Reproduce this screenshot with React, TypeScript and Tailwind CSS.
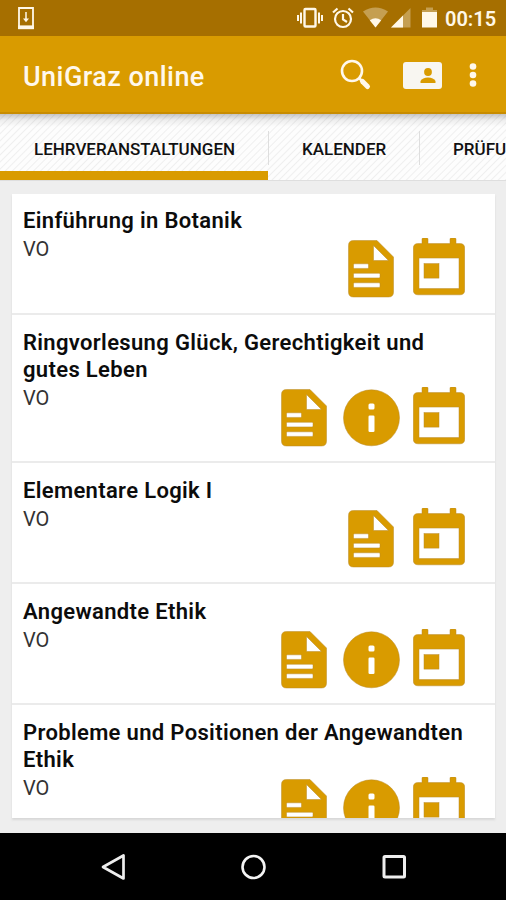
const GOLD = '#d99b00';

function DocIcon() {
  return (
    <svg width="46" height="60" viewBox="0 0 46 60" className="shrink-0">
      <path fillRule="evenodd" fill={GOLD} stroke="#b98a2a" strokeWidth="0.5"
        d="M5.5 2.5H29L45.500 19V54q0 5-5 5H5.500q-5 0-5-5V7.500q0-5 5-5zM25.500 7.500V22.500H40.500zM6.500 25.800q-1 0-1 1v2.600q0 1 1 1H19.500q1 0 1-1V26.800q0-1-1-1zM6.500 35.300q-1 0-1 1v2.600q0 1 1 1H31q1 0 1-1V36.300q0-1-1-1zM6.500 44.800q-1 0-1 1v2.600q0 1 1 1H31q1 0 1-1V45.800q0-1-1-1z" />
    </svg>
  );
}

function InfoIcon() {
  return (
    <svg width="57" height="60" viewBox="0 0 57 60" className="shrink-0">
      <circle cx="28.500" cy="30.800" r="28" fill={GOLD} stroke="#b98a2a" strokeWidth="0.5" />
      <rect x="25.500" y="16.500" width="6" height="6" rx="1.500" fill="#fff" />
      <rect x="25.500" y="28.500" width="6" height="16.500" rx="1.300" fill="#fff" />
    </svg>
  );
}

function CalendarIcon() {
  return (
    <svg width="52" height="60" viewBox="0 0.4 52 60" className="shrink-0">
      <path fillRule="evenodd" fill={GOLD} stroke="#b98a2a" strokeWidth="0.5"
        d="M9 6V1.500q0-1 1-1H14q1 0 1 1V6H37V1.500q0-1 1-1H42q1 0 1 1V6H47q4.700 0 4.700 4.700V52.500q0 4.700-4.700 4.700H5Q.3 57.200.3 52.500V10.700Q.3 6 5 6zM6 20.500V51H46V20.500z" />
      <rect x="11" y="26" width="15" height="14.500" fill={GOLD} stroke="#b98a2a" strokeWidth="0.5" />
    </svg>
  );
}

type Course = { lines: string[]; info: boolean };

const courses: Course[] = [
  { lines: ['Einführung in Botanik'], info: false },
  { lines: ['Ringvorlesung Glück, Gerechtigkeit und', 'gutes Leben'], info: true },
  { lines: ['Elementare Logik I'], info: false },
  { lines: ['Angewandte Ethik'], info: true },
  { lines: ['Probleme und Positionen der Angewandten', 'Ethik'], info: true },
];

function CourseRow({ lines, info }: Course) {
  return (
    <li className={`shrink-0 border-b-2 border-[#ebebeb] pl-[11px] pr-[30px] pt-[14px] first:pt-[13px] ${lines.length > 1 ? 'h-[148px]' : 'h-[121px]'}`}>
      <h2 className="text-[22px] font-semibold leading-[27px] tracking-[0.34px] text-[#0c0c0c]">
        {lines.map((line) => (
          <span key={line} className="block whitespace-nowrap">{line}</span>
        ))}
      </h2>
      <div className="flex justify-between">
        <span className="mt-px text-[20px] leading-[28px] text-[#333]">VO</span>
        <div className="mt-[4px] flex">
          <DocIcon />
          {info && <div className="ml-[16px] flex"><InfoIcon /></div>}
          <div className={info ? 'ml-[13px]' : 'ml-[19px]'}><CalendarIcon /></div>
        </div>
      </div>
    </li>
  );
}

function StatusBar() {
  return (
    <div className="flex h-[36px] shrink-0 items-center bg-[#a66f00] pl-[17px] pr-[11px] text-[#fff8e8]">
      <svg width="18" height="24" viewBox="0 0 18 24" fill="none" stroke="currentColor">
        <path d="M2 2H16V22H2z" strokeWidth="1.800" />
        <path d="M1.100 21.300H16.900" strokeWidth="3.800" />
        <path d="M9 6v7" strokeWidth="1.500" />
        <path d="M6 12.500h6l-3 3.800z" fill="currentColor" stroke="none" />
      </svg>
      <div className="ml-auto flex items-center">
        <svg width="26" height="22" viewBox="0 0 26 22" fill="none" stroke="currentColor" strokeWidth="2">
          <rect x="7.500" y="2" width="11" height="17.500" rx="1" strokeWidth="2.400" />
          <path d="M1 8v6M4 5.500v11M22 5.500v11M25 8v6" />
        </svg>
        <svg className="ml-[9px]" width="22" height="22" viewBox="0 0 22 22" fill="none" stroke="currentColor" strokeWidth="2.200">
          <circle cx="11" cy="12" r="8" />
          <path d="M1 5.500 5.500 1.500M21 5.500 16.500 1.500M11 7v5.500l4 2.500" />
        </svg>
        <svg className="ml-[9px]" width="25" height="22" viewBox="0 0 25 22" fill="currentColor">
          <path d="M0 4.500Q12.500-3.500 25 4.500L12.500 20.500z" opacity=".35" />
          <path d="M6.800 13.200Q12.500 9.500 18.200 13.200L12.500 20.500z" />
        </svg>
        <svg className="ml-[3px]" width="20" height="22" viewBox="0 0 20 22" fill="currentColor">
          <path d="M0 20.500 19.500 1V20.500z" opacity=".35" />
          <path d="M0 20.500 12 8.500V20.500z" />
        </svg>
        <svg className="ml-[11px]" width="15" height="22" viewBox="0 0 15 22" fill="currentColor">
          <path d="M0 5V3H4V.5H11V3H15V5z" opacity=".35" />
          <path d="M0 5H15V20.500H0z" />
        </svg>
        <span className="ml-[8px] mt-[2px] w-[50px] whitespace-nowrap text-[20px] font-semibold leading-[24px]">00:15</span>
      </div>
    </div>
  );
}

function Toolbar() {
  return (
    <header className="flex h-[78px] shrink-0 items-center border-b-2 border-[#c88c00] bg-[#d99b00] pl-[23px] pr-[29px] text-[#fff8ec]">
      <h1 className="mt-[5px] whitespace-nowrap text-[27px] font-medium leading-[32px] tracking-[0.45px]">UniGraz online</h1>
      <svg className="ml-auto mt-[2px]" width="32" height="32" viewBox="0 0 32 32" fill="none" stroke="currentColor">
        <circle cx="12" cy="12" r="10" strokeWidth="2.600" />
        <path d="M19 19l3 3" strokeWidth="2.500" />
        <path d="M22.500 22.500l5 5" strokeWidth="5" strokeLinecap="round" />
      </svg>
      <svg className="ml-[31px] mt-[3px]" width="39" height="28" viewBox="0 0 39 28">
        <rect width="39" height="27" rx="3" fill="#f8f6f1" />
        <circle cx="25" cy="10" r="3.900" fill={GOLD} />
        <path d="M17.500 21v-2q2-3.500 7.500-3.500t7.500 3.500v2z" fill={GOLD} />
      </svg>
      <svg className="ml-[27px] mt-[2px]" width="8" height="26" viewBox="0 0 8 26" fill="currentColor">
        <circle cx="4" cy="4.500" r="3.300" />
        <circle cx="4" cy="13" r="3.300" />
        <circle cx="4" cy="21.500" r="3.300" />
      </svg>
    </header>
  );
}

function Tabs() {
  return (
    <nav className="h-[67px] shrink-0 bg-[linear-gradient(to_bottom,#00000038,#00000010_6px,transparent_13px),repeating-linear-gradient(135deg,#fdfdfd_0px,#fdfdfd_3px,#efefef_4px,#fdfdfd_5px)] text-[17px] font-medium leading-[20px] text-[#111]">
      <div className="flex h-full overflow-hidden border-b border-[#dedede]">
        <div className="-mb-px flex w-[268px] shrink-0 flex-col border-b-[10px] border-[#d99b00] pl-[34px] pt-[25px]">LEHRVERANSTALTUNGEN</div>
        <div className="mt-[17px] h-[34px] w-[152px] shrink-0 border-x border-[#dedede] pl-[33px] pt-[8px]">KALENDER</div>
        <div className="shrink-0 pl-[33px] pt-[25px]">PRÜFU</div>
      </div>
    </nav>
  );
}

export default function App() {
  return (
    <div className="flex h-[900px] w-[506px] flex-col overflow-hidden bg-[#eeeeee] font-['Roboto',sans-serif]">
      <StatusBar />
      <Toolbar />
      <Tabs />
      <main className="flex h-[652px] shrink-0 flex-col px-[12px] pt-[13px]">
        <ul className="flex h-[624px] w-[483px] flex-col overflow-hidden bg-white shadow-[0_2px_2px_#d8d8d8]">
          {courses.map((course) => (
            <CourseRow key={course.lines[0]} {...course} />
          ))}
        </ul>
      </main>
      <footer className="h-[67px] shrink-0 bg-black">
        <div className="flex h-full items-center pl-[100px] pt-px">
          <svg width="27" height="30" viewBox="0 0 27 30" fill="none" stroke="#eee" strokeWidth="2.700">
            <path d="M3 15 23.500 3.500V26.500z" strokeLinejoin="round" />
          </svg>
          <svg className="ml-[113px]" width="27" height="30" viewBox="0 0 27 30" fill="none" stroke="#f4f4f4" strokeWidth="2.600">
            <circle cx="13.500" cy="15" r="11" />
          </svg>
          <svg className="ml-[114px]" width="27" height="30" viewBox="0 0 27 30" fill="none" stroke="#eee" strokeWidth="3">
            <rect x="3" y="4.500" width="20.500" height="20.500" rx="1" />
          </svg>
        </div>
      </footer>
    </div>
  );
}
